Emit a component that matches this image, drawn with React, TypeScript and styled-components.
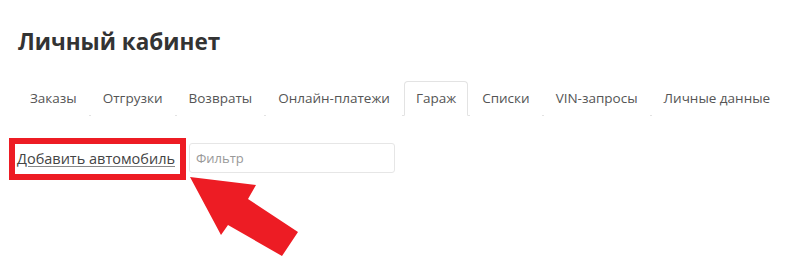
import React from "react";
import styled, { createGlobalStyle } from "styled-components";

const Global = createGlobalStyle`
  html, body { margin: 0; padding: 0; background: #fff; }
  body { font-family: "Open Sans", "Liberation Sans", sans-serif; color: #333; }
  * { box-sizing: border-box; }
`;

const Page = styled.div`
  position: relative;
  width: 800px;
  height: 268px;
  padding: 29px 18px 0 18px;
  overflow: hidden;
`;

const Title = styled.h1`
  margin: 0;
  font-size: 22.5px;
  line-height: 26px;
  font-weight: 700;
  color: #333;
`;

const Tabs = styled.ul`
  list-style: none;
  margin: 26px 0 0 0;
  padding: 0;
  display: flex;
  border-bottom: 1px solid #e3e3e3;
`;

const TabItem = styled.li`
  flex: 0 0 auto;
  margin: 0 2px -1px 0;
`;

const TabLink = styled.a<{ $active?: boolean }>`
  display: block;
  padding: 6px 11px 7px;
  line-height: 20px;
  font-size: 13.5px;
  white-space: nowrap;
  color: #555;
  text-decoration: none;
  border: 1px solid ${(p) => (p.$active ? "#e3e3e3" : "transparent")};
  border-bottom-color: ${(p) => (p.$active ? "#fff" : "transparent")};
  border-radius: 4px 4px 0 0;
  background: #fff;
`;

const Toolbar = styled.div`
  display: flex;
  align-items: flex-start;
  margin: 22px 0 0 -9px;
  gap: 3px;
`;

const Highlight = styled.div`
  border: 6px solid #ed1c24;
  padding: 4px 5px 4px 2px;
  height: 42px;
  display: flex;
  align-items: center;
`;

const AddLink = styled.a`
  font-size: 14.5px;
  line-height: 20px;
  color: #444;
  text-decoration: underline;
  text-decoration-color: #888;
  text-underline-offset: 2px;
  white-space: nowrap;
`;

const FilterInput = styled.input`
  margin-top: 5px;
  width: 206px;
  height: 30px;
  border: 1px solid #e6e6e6;
  border-radius: 3px;
  padding: 0 6px;
  font-family: "Open Sans", "Liberation Sans", sans-serif;
  font-size: 13px;
  color: #555;
  outline: none;
  &::placeholder { color: #999; }
`;

const Arrow = styled.svg`
  position: absolute;
  left: 0;
  top: 0;
  pointer-events: none;
`;

const tabs = [
  "Заказы",
  "Отгрузки",
  "Возвраты",
  "Онлайн-платежи",
  "Гараж",
  "Списки",
  "VIN-запросы",
  "Личные данные",
];

export default function App() {
  return (
    <>
      <Global />
      <Page>
        <Title>Личный кабинет</Title>
        <Tabs>
          {tabs.map((t) => (
            <TabItem key={t}>
              <TabLink href="#" $active={t === "Гараж"}>
                {t}
              </TabLink>
            </TabItem>
          ))}
        </Tabs>
        <Toolbar>
          <Highlight>
            <AddLink href="#">Добавить автомобиль</AddLink>
          </Highlight>
          <FilterInput placeholder="Фильтр" />
        </Toolbar>
        <Arrow width="800" height="268" viewBox="0 0 800 268">
          <polygon
            points="190,177 256,185 248,199 298,232 282,256 228,225 221,235"
            fill="#ed1c24"
          />
        </Arrow>
      </Page>
    </>
  );
}
